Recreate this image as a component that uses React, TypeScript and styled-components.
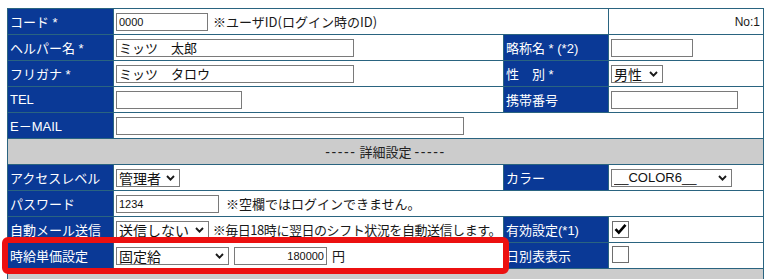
import React from "react";
import styled, { createGlobalStyle } from "styled-components";

const Global = createGlobalStyle`
  html, body { margin: 0; padding: 0; background: #ffffff; }
  body { font-family: "Liberation Sans", "Noto Sans CJK JP", sans-serif; font-size: 13px; color: #1a1a1a; }
`;

const Page = styled.div`
  position: relative;
  padding: 8px 0 0 7px;
  width: 764px;
  height: 279px;
  overflow: hidden;
  box-sizing: border-box;
`;

const FormTable = styled.table`
  border-collapse: separate;
  border-spacing: 1px;
  background: #2a6480;
  table-layout: fixed;
  width: 757px;
`;

const Label = styled.th`
  background: #0a3996;
  color: #ffffff;
  font-weight: normal;
  text-align: left;
  padding: 0 0 0 2px;
  height: 25px;
  white-space: nowrap;
  font-size: 13px;
  overflow: hidden;
`;

const Cell = styled.td<{ $right?: boolean }>`
  background: #ffffff;
  padding: 0 2px;
  height: 25px;
  white-space: nowrap;
  text-align: ${(p) => (p.$right ? "right" : "left")};
  overflow: visible;
`;

const SectionCell = styled.td`
  background: #cccccc;
  text-align: center;
  height: 25px;
  padding: 0;
  font-family: "Noto Sans CJK JP", sans-serif;
  font-size: 13px;
  color: #222;
`;

const Dashes = styled.span`
  font-family: "Liberation Sans", sans-serif;
  font-size: 14px;
  letter-spacing: 1.6px;
`;

const Line = styled.div<{ $gap?: number }>`
  display: flex;
  align-items: center;
  gap: ${(p) => p.$gap ?? 5}px;
`;

const Note = styled.span<{ $tight?: boolean }>`
  font-family: "Noto Sans CJK JP", sans-serif;
  font-size: 13px;
  letter-spacing: ${(p) => (p.$tight ? "-0.45px" : "0")};
  color: #1a1a1a;
`;

const NoText = styled.span`
  font-family: "Liberation Sans", sans-serif;
  font-size: 12px;
  padding-right: 1px;
`;

const TextInput = styled.input<{ $w: number; $right?: boolean; $jp?: boolean }>`
  box-sizing: border-box;
  width: ${(p) => p.$w}px;
  height: 18px;
  margin: 0;
  padding: 0 2px;
  border: 1px solid #7a7a7a;
  border-radius: 0;
  background: #fff;
  font-family: ${(p) => (p.$jp ? `"Noto Sans CJK JP", sans-serif` : `"Liberation Sans", sans-serif`)};
  font-size: ${(p) => (p.$jp ? 13 : 11)}px;
  color: #111;
  text-align: ${(p) => (p.$right ? "right" : "left")};
  outline: none;
`;

const SelectWrap = styled.span<{ $w: number }>`
  position: relative;
  display: inline-block;
  width: ${(p) => p.$w}px;
  height: 18px;
`;

const Select = styled.select<{ $latin?: boolean }>`
  appearance: none;
  -webkit-appearance: none;
  box-sizing: border-box;
  width: 100%;
  height: 18px;
  margin: 0;
  padding: 0 0 0 2px;
  border: 1px solid #7a7a7a;
  border-radius: 0;
  background: #fff;
  font-family: ${(p) => (p.$latin ? `"Liberation Sans", sans-serif` : `"Noto Sans CJK JP", sans-serif`)};
  font-size: ${(p) => (p.$latin ? 13 : 14)}px;
  line-height: 16px;
  color: #111;
  outline: none;
`;

const Chevron = styled.svg`
  position: absolute;
  right: 5px;
  top: 6px;
  pointer-events: none;
`;

const Box = styled.span`
  display: inline-flex;
  align-items: center;
  justify-content: center;
  box-sizing: border-box;
  width: 17px;
  height: 17px;
  border: 1px solid #6e6e6e;
  background: #fff;
  margin-left: 1px;
`;

const Highlight = styled.div`
  position: absolute;
  left: 2px;
  top: 237px;
  width: 507px;
  height: 37px;
  box-sizing: border-box;
  border: 6px solid #ec1010;
  border-radius: 6px;
  pointer-events: none;
`;

const Dropdown = ({ w, value, latin }: { w: number; value: string; latin?: boolean }) => (
  <SelectWrap $w={w}>
    <Select $latin={latin} defaultValue={value}>
      <option value={value}>{value}</option>
    </Select>
    <Chevron width="9" height="6" viewBox="0 0 9 6">
      <path d="M1 1 L4.5 4.6 L8 1" fill="none" stroke="#1a1a1a" strokeWidth="1.9" />
    </Chevron>
  </SelectWrap>
);

const Check = ({ checked }: { checked?: boolean }) => (
  <Box>
    {checked && (
      <svg width="13" height="12" viewBox="0 0 13 12">
        <path d="M1.5 6.2 L4.8 9.6 L11.5 1.8" fill="none" stroke="#000" strokeWidth="2.6" />
      </svg>
    )}
  </Box>
);

export default function App() {
  return (
    <>
      <Global />
      <Page>
        <FormTable>
          <colgroup>
            <col style={{ width: 105 }} />
            <col style={{ width: 389 }} />
            <col style={{ width: 104 }} />
            <col style={{ width: 154 }} />
          </colgroup>
          <tbody>
            <tr>
              <Label>コード *</Label>
              <Cell colSpan={2}>
                <Line>
                  <TextInput $w={92} defaultValue="0000" />
                  <Note>※ユーザID(ログイン時のID)</Note>
                </Line>
              </Cell>
              <Cell $right>
                <NoText>No:1</NoText>
              </Cell>
            </tr>
            <tr>
              <Label>ヘルパー名 *</Label>
              <Cell>
                <TextInput $w={238} $jp defaultValue="ミッツ　太郎" />
              </Cell>
              <Label>略称名 * (*2)</Label>
              <Cell>
                <TextInput $w={82} />
              </Cell>
            </tr>
            <tr>
              <Label>フリガナ *</Label>
              <Cell>
                <TextInput $w={238} $jp defaultValue="ミッツ　タロウ" />
              </Cell>
              <Label>性　別 *</Label>
              <Cell>
                <Dropdown w={52} value="男性" />
              </Cell>
            </tr>
            <tr>
              <Label>TEL</Label>
              <Cell>
                <TextInput $w={126} />
              </Cell>
              <Label>携帯番号</Label>
              <Cell>
                <TextInput $w={127} />
              </Cell>
            </tr>
            <tr>
              <Label>E－MAIL</Label>
              <Cell colSpan={3}>
                <TextInput $w={348} />
              </Cell>
            </tr>
            <tr>
              <SectionCell colSpan={4}>
                <Dashes>-----</Dashes> 詳細設定 <Dashes>-----</Dashes>
              </SectionCell>
            </tr>
            <tr>
              <Label>アクセスレベル</Label>
              <Cell>
                <Dropdown w={64} value="管理者" />
              </Cell>
              <Label>カラー</Label>
              <Cell>
                <Dropdown w={121} value="__COLOR6__" latin />
              </Cell>
            </tr>
            <tr>
              <Label>パスワード</Label>
              <Cell colSpan={3}>
                <Line $gap={7}>
                  <TextInput $w={103} defaultValue="1234" />
                  <Note>※空欄ではログインできません。</Note>
                </Line>
              </Cell>
            </tr>
            <tr>
              <Label>自動メール送信</Label>
              <Cell>
                <Line $gap={4}>
                  <Dropdown w={95} value="送信しない" />
                  <Note $tight>※毎日18時に翌日のシフト状況を自動送信します。</Note>
                </Line>
              </Cell>
              <Label>有効設定(*1)</Label>
              <Cell>
                <Check checked />
              </Cell>
            </tr>
            <tr>
              <Label>時給単価設定</Label>
              <Cell>
                <Line $gap={5}>
                  <Dropdown w={113} value="固定給" />
                  <TextInput $w={93} $right defaultValue="180000" />
                  <Note>円</Note>
                </Line>
              </Cell>
              <Label>日別表表示</Label>
              <Cell>
                <Check />
              </Cell>
            </tr>
            <tr>
              <SectionCell colSpan={4} />
            </tr>
          </tbody>
        </FormTable>
        <Highlight />
      </Page>
    </>
  );
}
